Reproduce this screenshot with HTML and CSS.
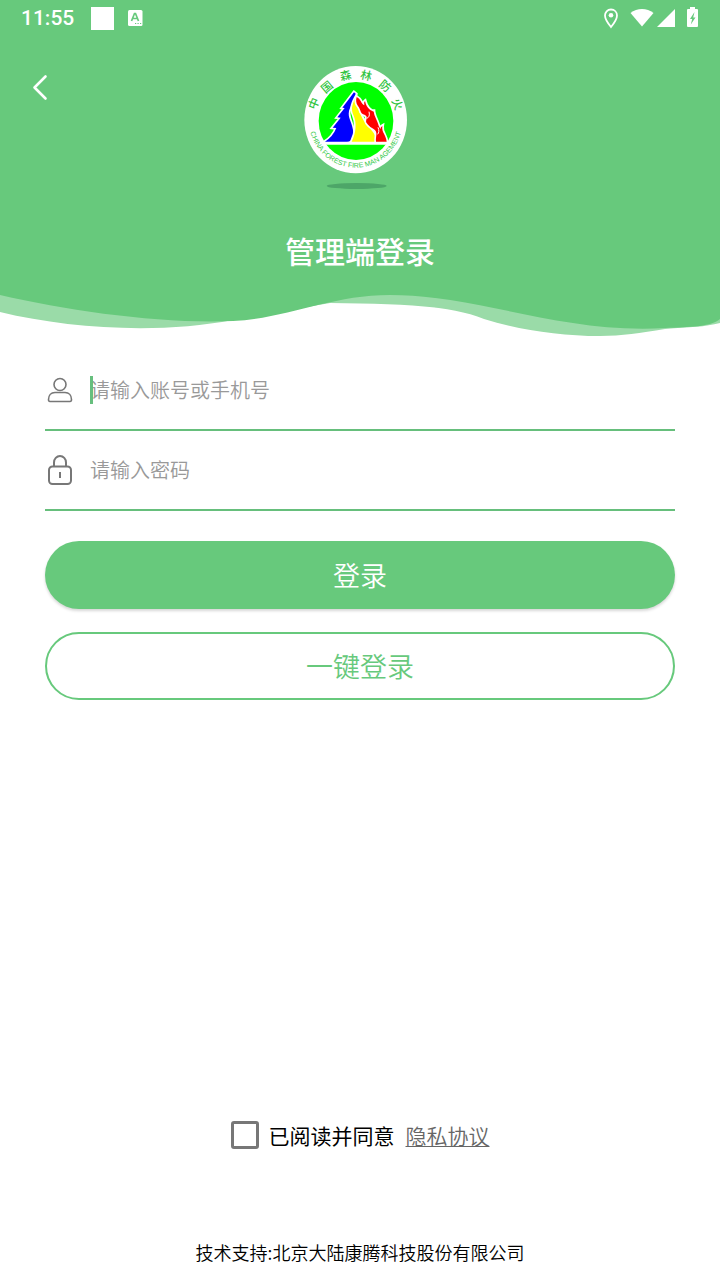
FILE: index.html
```html
<!DOCTYPE html>
<html lang="zh-CN">
<head>
<meta charset="utf-8">
<meta name="viewport" content="width=device-width, initial-scale=1">
<title>管理端登录</title>
<link rel="stylesheet" href="styles.css">
</head>
<body>
<div class="page">
  <header class="hero">
    <div class="status">
      <span class="clock">11:55</span>
      <span class="square"></span>
      <svg class="input-icon" width="16" height="18" viewBox="0 0 16 18" aria-hidden="true">
        <rect x="1" y="1" width="14.500" height="16" rx="1.500" fill="#fff"/>
        <path d="M4.500 12 7.500 4.500h1L11.500 12M5.800 9.500h4.400" fill="none" stroke="#67c97c" stroke-width="1.700"/>
        <path d="M8 14.500h1.200M10.500 14.500h1.200M13 14.500h1.200" stroke="#67c97c" stroke-width="1.200"/>
      </svg>
      <span class="spacer"></span>
      <svg width="100" height="24" viewBox="0 0 100 24" aria-hidden="true">
        <path d="M11 3.500c-3.600 0-6 2.700-6 6 0 4.200 6 11.500 6 11.500s6-7.300 6-11.500c0-3.300-2.400-6-6-6z" fill="none" stroke="#fff" stroke-width="1.800"/>
        <circle cx="11" cy="9.300" r="2.300" fill="#fff"/>
        <path d="M30.500 7c6.500-5.300 16.500-5.300 23 0L42 20.500z" fill="#fff"/>
        <path d="M75 3v18H57z" fill="#fff"/>
        <path d="M90 1h5v2h2q1 0 1 1v16q0 1-1 1h-9q-1 0-1-1V4q0-1 1-1h2z" fill="#fff"/>
        <path d="M94.500 6 90 13h2.200l-1.400 5.500 4.700-7h-2.300z" fill="#67c97c"/>
      </svg>
    </div>
    <div class="brand">
      <button class="back" type="button" aria-label="返回">
        <svg width="20" height="28" viewBox="0 0 20 28" aria-hidden="true"><path d="M15.500 3.500 4.500 14.500l11 11" fill="none" stroke="#fff" stroke-width="2.600" stroke-linecap="round" stroke-linejoin="round"/></svg>
      </button>
      <svg class="logo" width="130" height="135" viewBox="0 0 390 405" role="img" aria-label="中国森林防火">
        <defs>
          <path id="arc-bottom" d="M41 178a141 145 0 0 0 282 0"/>
        </defs>
        <ellipse cx="182" cy="179" rx="154" ry="161" fill="#fff"/>
        <ellipse cx="183" cy="183" rx="112" ry="117" fill="#0f0"/>
        <path d="M72 244H294V254H72z" fill="#fff"/>
        <g class="peaks" stroke="#fff" stroke-width="10">
          <path d="M177 97 142 143l7 1-22 28 10 1-24 30 11 1q-10 25-34 41h66c18 0 21-17 18-35-4-26-16-36-12-57 4-17 18-30 21-51z" fill="#00f"/>
          <path d="M182 113c-13 24-14 36-6 54 9 20 8 50-6 78h76c-3-20-12-30-23-42-20-20-33-49-41-90z" fill="#ff0"/>
          <path d="M185 111c14 7 12 19 23 25q-2-10 2-13c4 16 10 26 26 32v-7c-1 18 10 30 15 49l5 10q1-6 6-9c-3 19 11 26 13 47h-32c-1-16 4-22-1-32-5-8-18-10-27-24-5-7 4-16-2-22-6-4-12-4-15-10-3-8-4-13-9-19-6-8-7-18-4-27z" fill="#f00"/>
        </g>
        <path d="M222 155c3 11 0 18-7 20M249 202c4 9 3 16-1 21" fill="none" stroke="#fff" stroke-width="3"/>
        <g class="logo-cn" text-anchor="middle">
          <text transform="translate(58 131) rotate(-68)" dy="11">中</text>
          <text transform="translate(97 82) rotate(-40)" dy="11">国</text>
          <text transform="translate(152 48) rotate(-13)" dy="11">森</text>
          <text transform="translate(213 48) rotate(13)" dy="11">林</text>
          <text transform="translate(270 79) rotate(40)" dy="11">防</text>
          <text transform="translate(306 133) rotate(68)" dy="11">火</text>
        </g>
        <text class="logo-en"><textPath href="#arc-bottom" startOffset="50%" text-anchor="middle">CHINA FOREST FIRE MAN AGEMENT</textPath></text>
        <ellipse cx="185" cy="378" rx="90" ry="9" fill="#4da668"/>
      </svg>
    </div>
    <h1 class="title">管理端登录</h1>
  </header>
  <svg class="wave" viewBox="0 0 720 46" preserveAspectRatio="none" aria-hidden="true">
    <path d="M0 0H720V33C705 37 690 37 665 39C640 43 622 46 600 46C560 46 520 40 484 29C450 15 400 14 330 13L233 30C160 44 70 39 0 22z" fill="#9adba8"/>
    <path d="M0 0H720V29C710 37 690 37 665 38C560 44 480 5 390 5C330 5 290 28 233 31C160 34 70 21 0 5z" fill="#67c97c"/>
  </svg>
  <main class="content">
    <form class="form">
      <label class="field focused">
        <svg width="30" height="30" viewBox="0 0 30 30" fill="none" stroke="#777" stroke-width="1.600" aria-label="账号">
          <circle cx="15" cy="9.500" r="6"/>
          <path d="M10 17.500h10c4 0 6.500 3 6.500 7 0 1-.5 2-1.500 2H5c-1 0-1.500-1-1.500-2 0-4 2.500-7 6.500-7z"/>
        </svg>
        <span class="entry"><input type="text" placeholder="请输入账号或手机号"></span>
      </label>
      <label class="field">
        <svg width="30" height="30" viewBox="0 0 30 30" fill="none" stroke="#777" stroke-width="2" aria-label="密码">
          <rect x="4" y="11.500" width="22" height="17.500" rx="3.500"/>
          <path d="M9 11.500V7.500a6 6.500 0 0 1 12 0v4M15 17v6"/>
        </svg>
        <span class="entry"><input type="password" placeholder="请输入密码"></span>
      </label>
      <button class="btn primary" type="button">登录</button>
      <button class="btn outline" type="button">一键登录</button>
    </form>
    <div class="agree">
      <label class="agree-label"><input type="checkbox">已阅读并同意</label>
      <a href="#privacy">隐私协议</a>
    </div>
  </main>
  <footer class="support">技术支持:北京大陆康腾科技股份有限公司</footer>
</div>
</body>
</html>
```

FILE: styles.css
```css
* { box-sizing: border-box; }

body {
  margin: 0;
  background: #fff;
  color: #000;
  font-family: "Noto Sans CJK SC", sans-serif;
}

button, input {
  font: inherit;
}

.page {
  display: flex;
  flex-direction: column;
  min-height: 100vh;
}

.hero {
  background: #67c97c;
  color: #fff;
  padding-bottom: 19px;
}

.status {
  display: flex;
  align-items: center;
  height: 36px;
  padding: 0 20px 0 21px;
}

.clock {
  font: 500 21px/36px Roboto, sans-serif;
}

.square {
  width: 23px;
  height: 23px;
  margin: 0 13px 0 17px;
  background: #fff;
}

.spacer { flex: 1; }

.brand {
  display: grid;
  grid-template-columns: 1fr auto 1fr;
  align-items: start;
  padding: 24px 30px 0;
}

.back {
  width: 20px;
  height: 28px;
  margin-top: 13px;
  padding: 0;
  border: 0;
  background: none;
}

.logo { display: block; }

.peaks {
  paint-order: stroke;
}

.logo-cn {
  font-size: 34px;
  font-weight: 500;
  fill: #2fc440;
}

.logo-en {
  font: 21px "Liberation Sans", sans-serif;
  fill: #35c948;
}

.title {
  margin: 34px 0 0;
  font-size: 30px;
  line-height: 42px;
  font-weight: 500;
  text-align: center;
}

.wave {
  display: block;
  width: 100%;
  height: 46px;
}

.content {
  flex: 1;
  display: flex;
  flex-direction: column;
  padding: 15px 45px 0;
}

.form {
  display: flex;
  flex-direction: column;
}

.field {
  display: flex;
  align-items: center;
  gap: 15px;
  height: 80px;
  border-bottom: 2px solid #66bf7c;
}

.entry {
  position: relative;
  flex: 1;
  display: flex;
}

.entry input {
  width: 100%;
  height: 30px;
  padding: 0;
  border: 0;
  outline: 0;
  background: none;
  font-size: 20px;
  line-height: 30px;
  font-weight: 350;
}

.entry input::placeholder {
  color: #999;
  opacity: 1;
}

.focused .entry::before {
  content: "";
  position: absolute;
  left: 0;
  top: 1px;
  width: 3px;
  height: 28px;
  background: #67bf7e;
}

.btn {
  height: 68px;
  padding: 0;
  border: 0;
  border-radius: 34px;
  font-size: 27px;
  line-height: 40px;
  font-weight: 350;
}

.primary {
  margin-top: 30px;
  background: #67c97c;
  color: #fff;
  box-shadow: 0 2px 3px rgba(0, 0, 0, 0.16);
}

.outline {
  margin-top: 23px;
  border: 2px solid #67c97c;
  background: #fff;
  color: #67c97c;
}

.agree {
  display: flex;
  justify-content: center;
  align-items: center;
  gap: 11px;
  margin-top: auto;
  font-size: 21px;
  line-height: 32px;
}

.agree-label {
  display: flex;
  align-items: center;
  gap: 10px;
}

.agree-label input {
  appearance: none;
  width: 28px;
  height: 28px;
  margin: 0;
  border: 3px solid #777;
  border-radius: 3px;
}

.agree a {
  color: #666;
  font-weight: 350;
  text-underline-offset: 2px;
  text-decoration-thickness: 1px;
}

.support {
  margin-top: 88px;
  padding-bottom: 14px;
  font-size: 18px;
  line-height: 27px;
  font-weight: 350;
  text-align: center;
}
```
